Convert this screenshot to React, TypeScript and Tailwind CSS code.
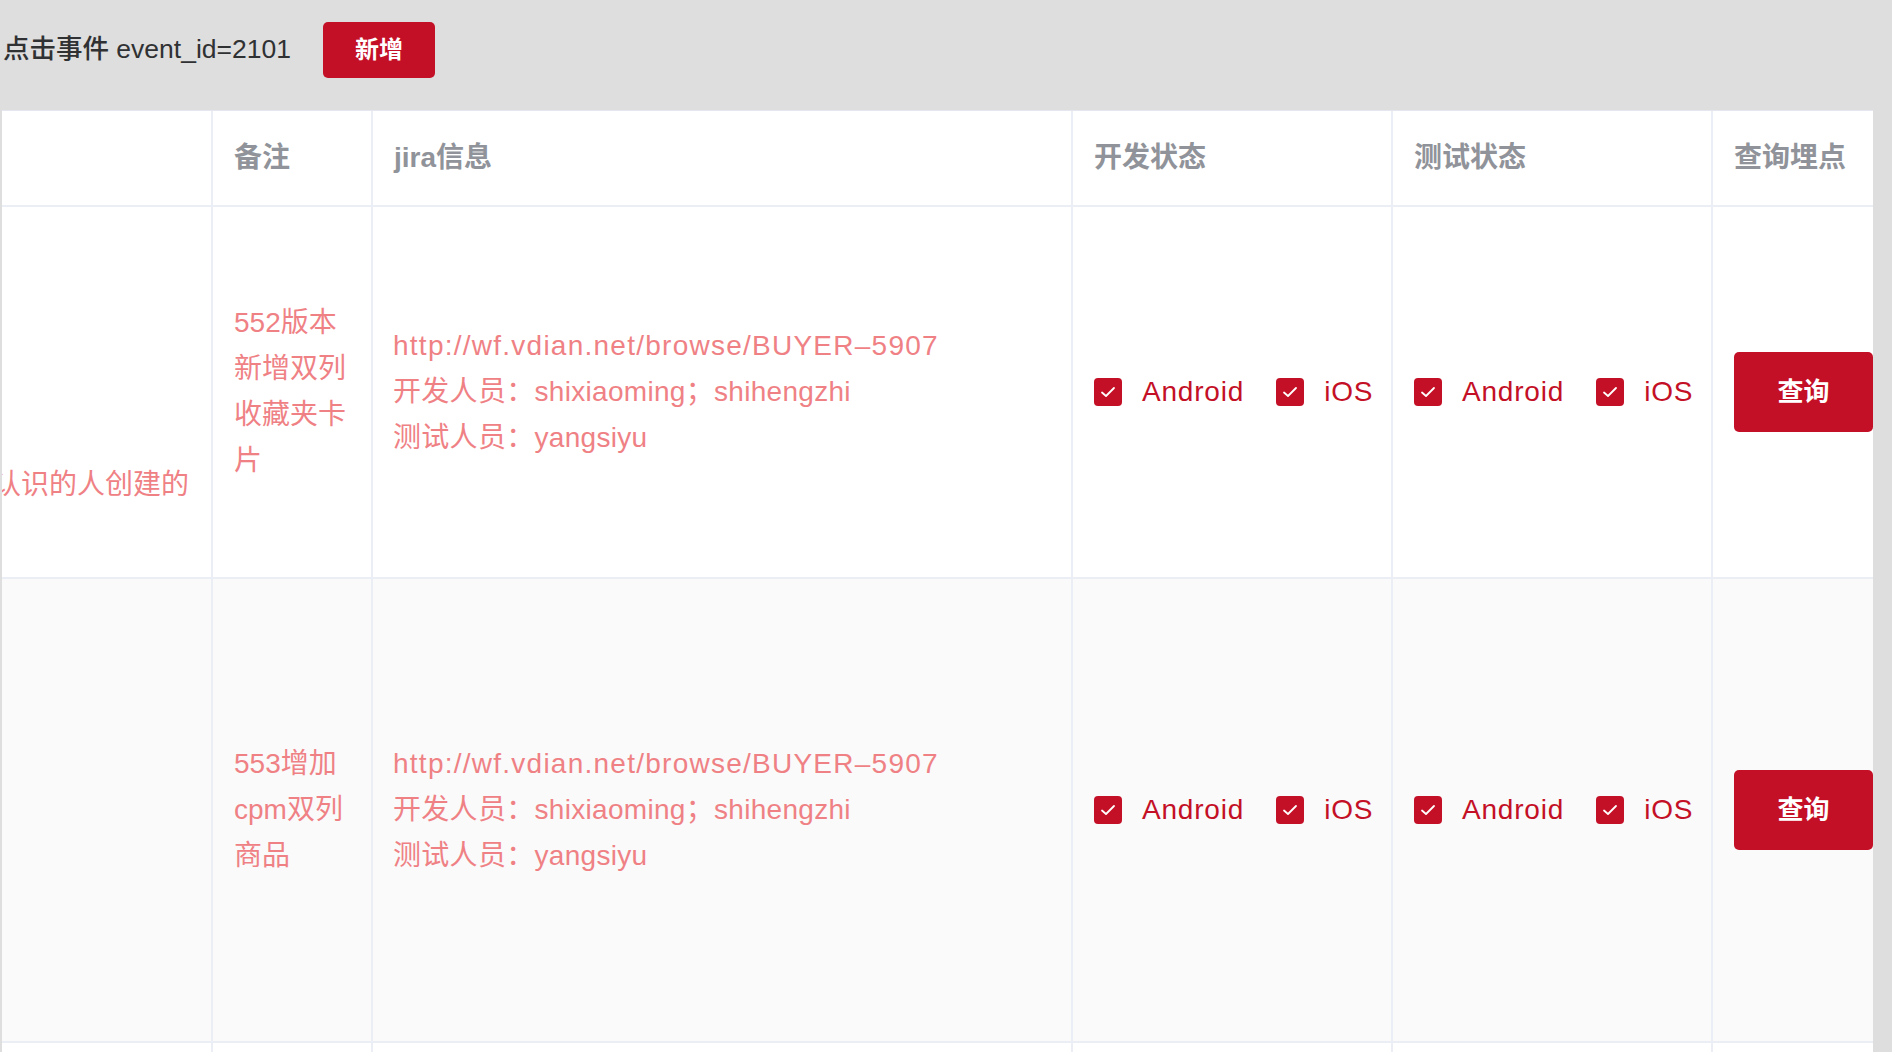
import React from "react";

const font = "font-['Liberation_Sans','Noto_Sans_CJK_SC',sans-serif]";

type Row = {
  owner: string;
  note: string;
  jira: string;
  dev: string;
  test: string;
  height: string;
  striped: boolean;
};

const rows: Row[] = [
  {
    owner: "被不认识的人创建的",
    note: "552版本新增双列收藏夹卡片",
    jira: "http://wf.vdian.net/browse/BUYER–5907",
    dev: "shixiaoming；shihengzhi",
    test: "yangsiyu",
    height: "h-[372px]",
    striped: false,
  },
  {
    owner: "",
    note: "553增加cpm双列商品",
    jira: "http://wf.vdian.net/browse/BUYER–5907",
    dev: "shixiaoming；shihengzhi",
    test: "yangsiyu",
    height: "h-[464px]",
    striped: true,
  },
];

function Check({ label }: { label: string }) {
  return (
    <div className="flex items-center">
      <span className="flex h-[28px] w-[28px] items-center justify-center rounded-[4px] bg-[#c41026]">
        <svg width="16" height="12" viewBox="0 0 16 12" fill="none">
          <path d="M2 6.5 L6 10 L14 2" stroke="#fff" strokeWidth="1.8" strokeLinecap="round" strokeLinejoin="round" />
        </svg>
      </span>
      <span className="ml-[20px] text-[28px] leading-[46px] tracking-[0.8px] text-[#c41026]">{label}</span>
    </div>
  );
}

function Platforms() {
  return (
    <div className="flex items-center gap-[32px]">
      <Check label="Android" />
      <Check label="iOS" />
    </div>
  );
}

const cell = "border-r-2 border-b-2 border-[#ebeef5]";

export default function App() {
  return (
    <div className={`h-screen w-screen overflow-hidden bg-[#dedede] ${font}`}>
      <div className="flex h-[100px] items-center pl-[3px]">
        <span className="text-[26.5px] font-medium text-[#303133]">点击事件 event_id=2101</span>
        <button className="ml-[32px] h-[56px] w-[112px] rounded-[5px] bg-[#c41026] text-[24px] font-bold text-white">
          新增
        </button>
      </div>

      <div className="mt-[10px] ml-[2px] w-[1871px] border-t border-[#e4e7ed] bg-white">
        <div className="grid grid-cols-[211px_160px_700px_320px_320px_160px]">
          {["", "备注", "jira信息", "开发状态", "测试状态", "查询埋点"].map((h, i) => (
            <div
              key={i}
              className={`flex h-[96px] items-center pl-[21px] text-[28px] font-bold text-[#909399] ${
                i === 5 ? "border-b-2 border-[#ebeef5]" : cell
              }`}
            >
              {h}
            </div>
          ))}

          {rows.map((r, idx) => {
            const bg = r.striped ? "bg-[#fafafa]" : "bg-white";
            return (
              <React.Fragment key={idx}>
                <div className={`${cell} ${bg} ${r.height} flex items-end justify-end overflow-hidden pr-[22px] pb-[69px]`}>
                  <span className="shrink-0 whitespace-nowrap text-[28px] leading-[46px] text-[#ef8185]">{r.owner}</span>
                </div>
                <div className={`${cell} ${bg} flex items-center pl-[21px] pr-[21px]`}>
                  <p className="text-[28px] leading-[46px] text-[#ef8185]">{r.note}</p>
                </div>
                <div className={`${cell} ${bg} flex flex-col justify-center pl-[20px] text-[28px] leading-[46px] text-[#ef8185]`}>
                  <span className="tracking-[1.25px]">{r.jira}</span>
                  <span className="tracking-[0.3px]">开发人员：{r.dev}</span>
                  <span className="tracking-[0.3px]">测试人员：{r.test}</span>
                </div>
                <div className={`${cell} ${bg} flex items-center pl-[21px]`}>
                  <Platforms />
                </div>
                <div className={`${cell} ${bg} flex items-center pl-[21px]`}>
                  <Platforms />
                </div>
                <div className={`border-b-2 border-[#ebeef5] ${bg} flex items-center pl-[21px]`}>
                  <button className="h-[80px] w-[139px] rounded-[5px] bg-[#c41026] text-[26px] font-bold text-white">
                    查询
                  </button>
                </div>
              </React.Fragment>
            );
          })}

          {[0, 1, 2, 3, 4, 5].map((i) => (
            <div key={i} className={`h-[60px] ${i === 5 ? "" : "border-r-2 border-[#ebeef5]"}`} />
          ))}
        </div>
      </div>
    </div>
  );
}
